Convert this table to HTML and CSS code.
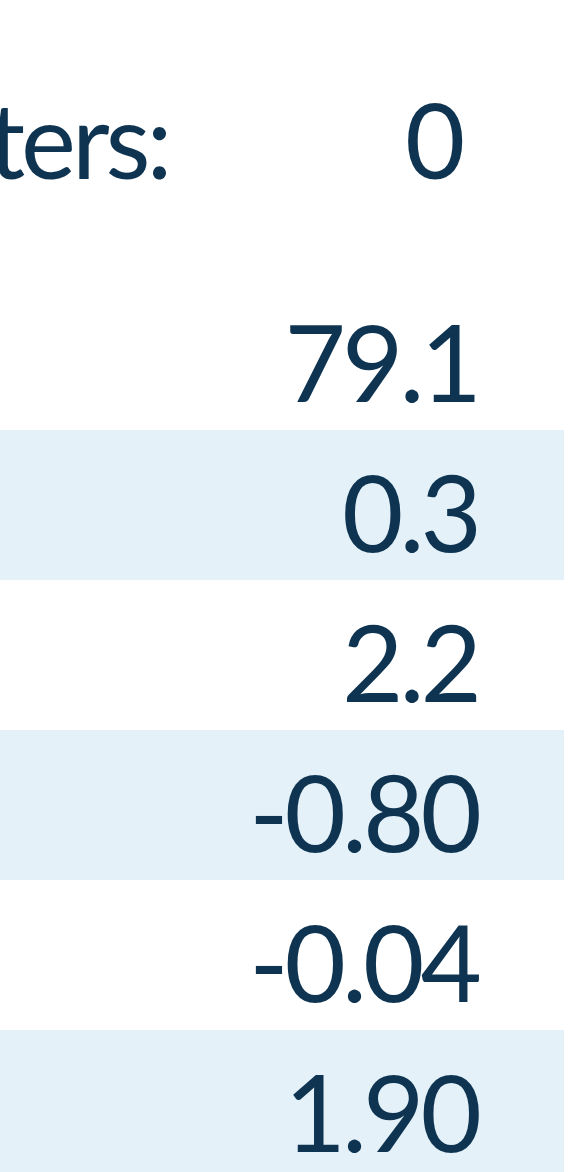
FILE: index.html
```html
<!DOCTYPE html>
<html lang="en">
<head>
    <meta charset="UTF-8">
    <meta name="viewport" content="width=device-width, initial-scale=1.0">
    <title>Summary</title>
    <link rel="stylesheet" href="styles.css">
</head>
<body>
    <div class="container">
        <!-- Header -->
        <div class="summary-head">
            <span class="head-label">ters:</span>
            <span class="head-value">0</span>
        </div>

        <!-- Values -->
        <div class="stats">
            <div class="stat-row"><span>79.1</span></div>
            <div class="stat-row"><span>0.3</span></div>
            <div class="stat-row"><span>2.2</span></div>
            <div class="stat-row"><span>-0.80</span></div>
            <div class="stat-row"><span>-0.04</span></div>
            <div class="stat-row"><span>1.90</span></div>
        </div>
    </div>
</body>
</html>
```
FILE: styles.css
```css
body {
    margin: 0;
    background-color: #fff;
    font-family: Lato, "Open Sans", sans-serif;
    color: #0e3451;
}

.container {
    width: 564px;
}

.summary-head {
    display: flex;
    align-items: baseline;
    height: 280px;
    padding-top: 64px;
    box-sizing: border-box;
    font-size: 104px;
    line-height: 150px;
    letter-spacing: -4px;
}

.head-label {
    width: 417px;
    margin-left: -12px;
}

.stats {
    display: flex;
    flex-direction: column;
}

.stat-row {
    height: 150px;
    padding-right: 86px;
    text-align: right;
    font-size: 106px;
    line-height: 162px;
    letter-spacing: -4px;
    box-sizing: border-box;
}

.stat-row:nth-child(even) {
    background-color: #e4f1f8;
}
```
